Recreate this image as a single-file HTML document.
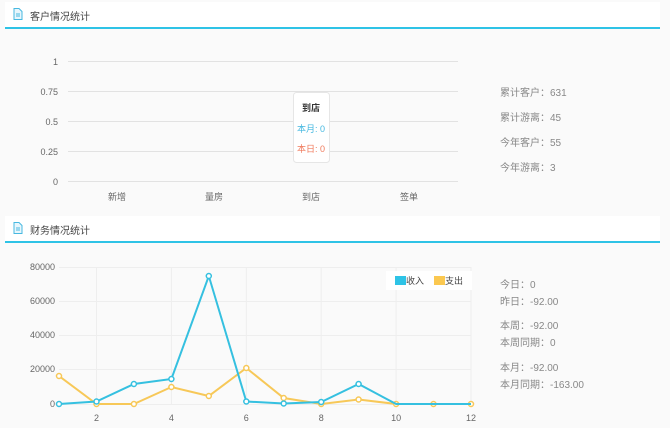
<!DOCTYPE html>
<html><head><meta charset="utf-8"><style>
body{margin:0;width:670px;height:428px;background:#fafafa;font-family:"Liberation Sans","Noto Sans CJK SC",sans-serif;position:relative;overflow:hidden}
.hd{position:absolute;left:5px;width:655px;height:25px;background:#fff;border-bottom:2px solid #2ec3e6;font-size:10px;color:#444}
.hd span{position:absolute;left:25px;top:6px}
.t{position:absolute;font-size:10px;color:#888;white-space:nowrap}
</style></head><body>
<div class="hd" style="top:2px"><svg style="position:absolute;left:8px;top:6px" width="10" height="12"><path d="M1 .5h5l3 3v8H1z" fill="#e8f6fc" stroke="#47b8e0"/><path d="M3 6h4M3 8h4" stroke="#47b8e0"/></svg><span>客户情况统计</span></div>
<div class="hd" style="top:216px"><svg style="position:absolute;left:8px;top:6px" width="10" height="12"><path d="M1 .5h5l3 3v8H1z" fill="#e8f6fc" stroke="#47b8e0"/><path d="M3 6h4M3 8h4" stroke="#47b8e0"/></svg><span>财务情况统计</span></div>
<svg style="position:absolute;left:0;top:0" width="670" height="428" font-family="Liberation Sans,Noto Sans CJK SC,sans-serif" font-size="9" fill="#666">
<g stroke="#e2e2e2" stroke-width="1"><line x1="68" x2="458" y1="61.5" y2="61.5"/><line x1="68" x2="458" y1="91.5" y2="91.5"/><line x1="68" x2="458" y1="121.5" y2="121.5"/><line x1="68" x2="458" y1="151.5" y2="151.5"/><line x1="68" x2="458" y1="181.5" y2="181.5"/></g>
<g text-anchor="end"><text x="58" y="65">1</text><text x="58" y="95">0.75</text><text x="58" y="125">0.5</text><text x="58" y="155">0.25</text><text x="58" y="185">0</text></g>
<g text-anchor="middle"><text x="117" y="200">新增</text><text x="214" y="200">量房</text><text x="311" y="200">到店</text><text x="409" y="200">签单</text></g>
<rect x="293.5" y="92.5" width="36" height="70" rx="3" fill="#fff" stroke="#e6e6e6"/>
<text x="311" y="111" text-anchor="middle" fill="#333" font-weight="bold">到店</text>
<text x="297" y="132" fill="#45b8e0">本月: 0</text>
<text x="297" y="152" fill="#f07a5c">本日: 0</text>
<g stroke="#eee"><line x1="59" x2="471" y1="267.5" y2="267.5"/><line x1="59" x2="471" y1="301.5" y2="301.5"/><line x1="59" x2="471" y1="335.5" y2="335.5"/><line x1="59" x2="471" y1="369.5" y2="369.5"/><line x1="59" x2="471" y1="404.5" y2="404.5"/>
<line x1="96.5" x2="96.5" y1="267" y2="404"/><line x1="171.4" x2="171.4" y1="267" y2="404"/><line x1="246.3" x2="246.3" y1="267" y2="404"/><line x1="321.2" x2="321.2" y1="267" y2="404"/><line x1="396.1" x2="396.1" y1="267" y2="404"/><line x1="471" x2="471" y1="267" y2="404"/></g>
<g text-anchor="end"><text x="55" y="270">80000</text><text x="55" y="304">60000</text><text x="55" y="338">40000</text><text x="55" y="372">20000</text><text x="55" y="407">0</text></g>
<g text-anchor="middle"><text x="96.5" y="421">2</text><text x="171.4" y="421">4</text><text x="246.3" y="421">6</text><text x="321.2" y="421">8</text><text x="396.1" y="421">10</text><text x="471" y="421">12</text></g>
<polyline fill="none" stroke="#f7c858" stroke-width="2" points="59,376 96.5,404 133.9,404 171.4,387 208.8,396 246.3,368 283.7,398 321.2,404 358.6,399.5 396.1,404 433.5,404 471,404"/>
<g fill="#fff" stroke="#f7c858" stroke-width="1.5"><circle cx="59" cy="376" r="2.5"/><circle cx="96.5" cy="404" r="2.5"/><circle cx="133.9" cy="404" r="2.5"/><circle cx="171.4" cy="387" r="2.5"/><circle cx="208.8" cy="396" r="2.5"/><circle cx="246.3" cy="368" r="2.5"/><circle cx="283.7" cy="398" r="2.5"/><circle cx="321.2" cy="404" r="2.5"/><circle cx="358.6" cy="399.5" r="2.5"/><circle cx="396.1" cy="404" r="2.5"/><circle cx="433.5" cy="404" r="2.5"/><circle cx="471" cy="404" r="2.5"/></g>
<polyline fill="none" stroke="#35c0e0" stroke-width="2" points="59,404 96.5,401.5 133.9,384 171.4,379 208.8,276 246.3,401.5 283.7,403.5 321.2,402 358.6,384 396.1,404 433.5,404 471,404"/>
<g fill="#fff" stroke="#35c0e0" stroke-width="1.5"><circle cx="59" cy="404" r="2.5"/><circle cx="96.5" cy="401.5" r="2.5"/><circle cx="133.9" cy="384" r="2.5"/><circle cx="171.4" cy="379" r="2.5"/><circle cx="208.8" cy="276" r="2.5"/><circle cx="246.3" cy="401.5" r="2.5"/><circle cx="283.7" cy="403.5" r="2.5"/><circle cx="321.2" cy="402" r="2.5"/><circle cx="358.6" cy="384" r="2.5"/></g>
<rect x="386" y="271" width="86" height="19" fill="#fff"/>
<rect x="395" y="276" width="11" height="9" fill="#2ec3e6"/><text x="406" y="284" fill="#444">收入</text>
<rect x="434" y="276" width="11" height="9" fill="#fbc850"/><text x="445" y="284" fill="#444">支出</text>
</svg>
<div class="t" style="left:500px;top:84px">累计客户：631</div>
<div class="t" style="left:500px;top:109px">累计游离：45</div>
<div class="t" style="left:500px;top:134px">今年客户：55</div>
<div class="t" style="left:500px;top:159px">今年游离：3</div>
<div class="t" style="left:500px;top:276px">今日：0</div>
<div class="t" style="left:500px;top:293px">昨日：-92.00</div>
<div class="t" style="left:500px;top:317px">本周：-92.00</div>
<div class="t" style="left:500px;top:334px">本周同期：0</div>
<div class="t" style="left:500px;top:359px">本月：-92.00</div>
<div class="t" style="left:500px;top:376px">本月同期：-163.00</div>
</body></html>
